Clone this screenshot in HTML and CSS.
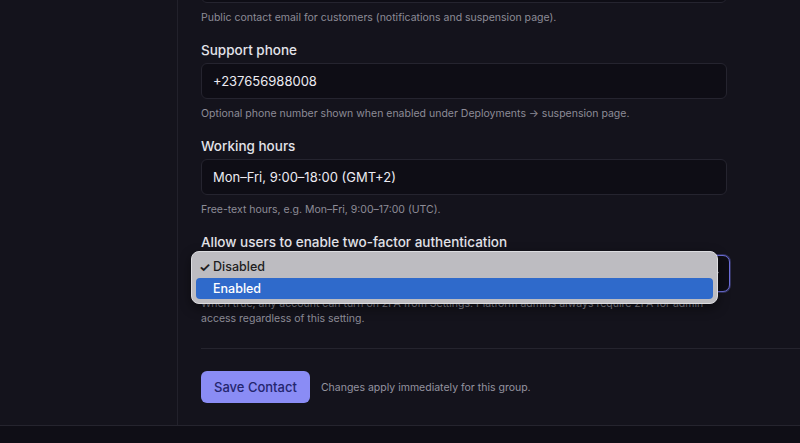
FILE: index.html
```html
<!DOCTYPE html>
<html lang="en">
<head>
<meta charset="utf-8">
<title>Contact settings</title>
<link rel="stylesheet" href="styles.css">
</head>
<body>
<div class="app">
  <div class="workspace">
    <aside class="sidebar"></aside>
    <main class="panel">
      <div class="form">
        <div class="field field-first">
          <input class="input" type="text" value="support@example.com" aria-label="Support email">
          <p class="help">Public contact email for customers (notifications and suspension page).</p>
        </div>
        <div class="field">
          <label class="label">Support phone</label>
          <input class="input" type="text" value="+237656988008">
          <p class="help">Optional phone number shown when enabled under Deployments → suspension page.</p>
        </div>
        <div class="field">
          <label class="label">Working hours</label>
          <input class="input" type="text" value="Mon–Fri, 9:00–18:00 (GMT+2)">
          <p class="help">Free-text hours, e.g. Mon–Fri, 9:00–17:00 (UTC).</p>
        </div>
        <div class="field">
          <label class="label">Allow users to enable two-factor authentication</label>
          <div class="select-wrap">
            <div class="select">
              <span class="select-value"></span>
              <svg class="chevron" width="10" height="10" viewBox="0 0 10 10"><path d="M2 3.5 L5 6.5 L8 3.5" fill="none" stroke="#d6d6de" stroke-width="1.2" stroke-linecap="round" stroke-linejoin="round"/></svg>
            </div>
            <div class="menu">
              <div class="menu-item"><span class="check">✓</span>Disabled</div>
              <div class="menu-item selected"><span class="check"></span>Enabled</div>
            </div>
          </div>
          <p class="help help-2fa">When true, any account can turn on 2FA from Settings. Platform admins always require 2FA for admin access regardless of this setting.</p>
        </div>
      </div>
      <div class="divider"></div>
      <div class="actions">
        <button class="btn" type="button">Save Contact</button>
        <span class="note">Changes apply immediately for this group.</span>
      </div>
    </main>
  </div>
  <footer class="footer"></footer>
</div>
</body>
</html>
```
FILE: styles.css
```css
* { box-sizing: border-box; }
html, body {
  margin: 0;
  padding: 0;
  height: 443px;
  overflow: hidden;
  background: #0f0e16;
  font-family: Inter, "Noto Sans", sans-serif;
}
.app {
  display: grid;
  grid-template-rows: 426px 17px;
  height: 443px;
}
.workspace {
  display: grid;
  grid-template-columns: 178px 1fr;
  background: #14131c;
  border-bottom: 1px solid #25242e;
  overflow: hidden;
}
.sidebar {
  border-right: 1px solid #22212b;
}
.panel {
  padding-left: 23px;
  display: flex;
  flex-direction: column;
}
.form {
  width: 526px;
  display: flex;
  flex-direction: column;
  gap: 15px;
  margin-top: -33px;
}
.field {
  display: flex;
  flex-direction: column;
}
.label {
  font-size: 13.5px;
  font-weight: 500;
  line-height: 20px;
  color: #e3e3ea;
  margin-bottom: 3px;
}
.input {
  height: 36px;
  width: 100%;
  background: #0e0d15;
  border: 1px solid #25242f;
  border-radius: 6px;
  padding: 0 11px;
  color: #ecebf2;
  font-family: inherit;
  font-size: 13px;
  outline: none;
}
.help {
  margin: 7px 0 0;
  font-size: 10.5px;
  line-height: 15px;
  color: #8d8c97;
}
.help-2fa {
  line-height: 14.5px;
  margin-top: 5px;
}
.select-wrap {
  position: relative;
}
.select {
  height: 37px;
  margin-right: -3px;
  background: #0e0d15;
  border: 1.5px solid #6d6fd9;
  border-radius: 7px;
  box-shadow: 0 0 0 1px rgba(109,111,217,0.35);
  display: flex;
  align-items: center;
  justify-content: flex-end;
  padding-right: 9px;
}
.menu {
  position: absolute;
  left: -10px;
  top: -4px;
  width: 527px;
  height: 53px;
  background: #bdbcc1;
  border: 1px solid #dcdce0;
  border-radius: 8px;
  box-shadow: 0 4px 12px rgba(0,0,0,0.45);
  padding: 4px 4px;
  display: flex;
  flex-direction: column;
  gap: 1px;
}
.menu-item {
  height: 21.5px;
  display: flex;
  align-items: center;
  font-family: Inter, "Open Sans", sans-serif;
  font-size: 12.5px;
  font-weight: 500;
  color: #1d1d20;
  border-radius: 4px;
  padding-left: 3px;
}
.menu-item .check {
  width: 14px;
  font-size: 13px;
  font-weight: 700;
}
.menu-item.selected {
  background: #2f6acb;
  color: #ffffff;
}
.divider {
  height: 1px;
  background: #25242e;
  margin-top: 22px;
  margin-right: -40px;
}
.actions {
  margin-top: 22px;
  display: flex;
  align-items: center;
  gap: 11px;
}
.btn {
  height: 32px;
  padding: 0 13px;
  border: none;
  border-radius: 6px;
  background: #8a8cf5;
  color: #24256e;
  font-family: inherit;
  font-size: 13px;
  font-weight: 500;
}
.note {
  font-size: 10.5px;
  color: #9594a0;
}
.footer {
  background: #0f0e16;
}
```
